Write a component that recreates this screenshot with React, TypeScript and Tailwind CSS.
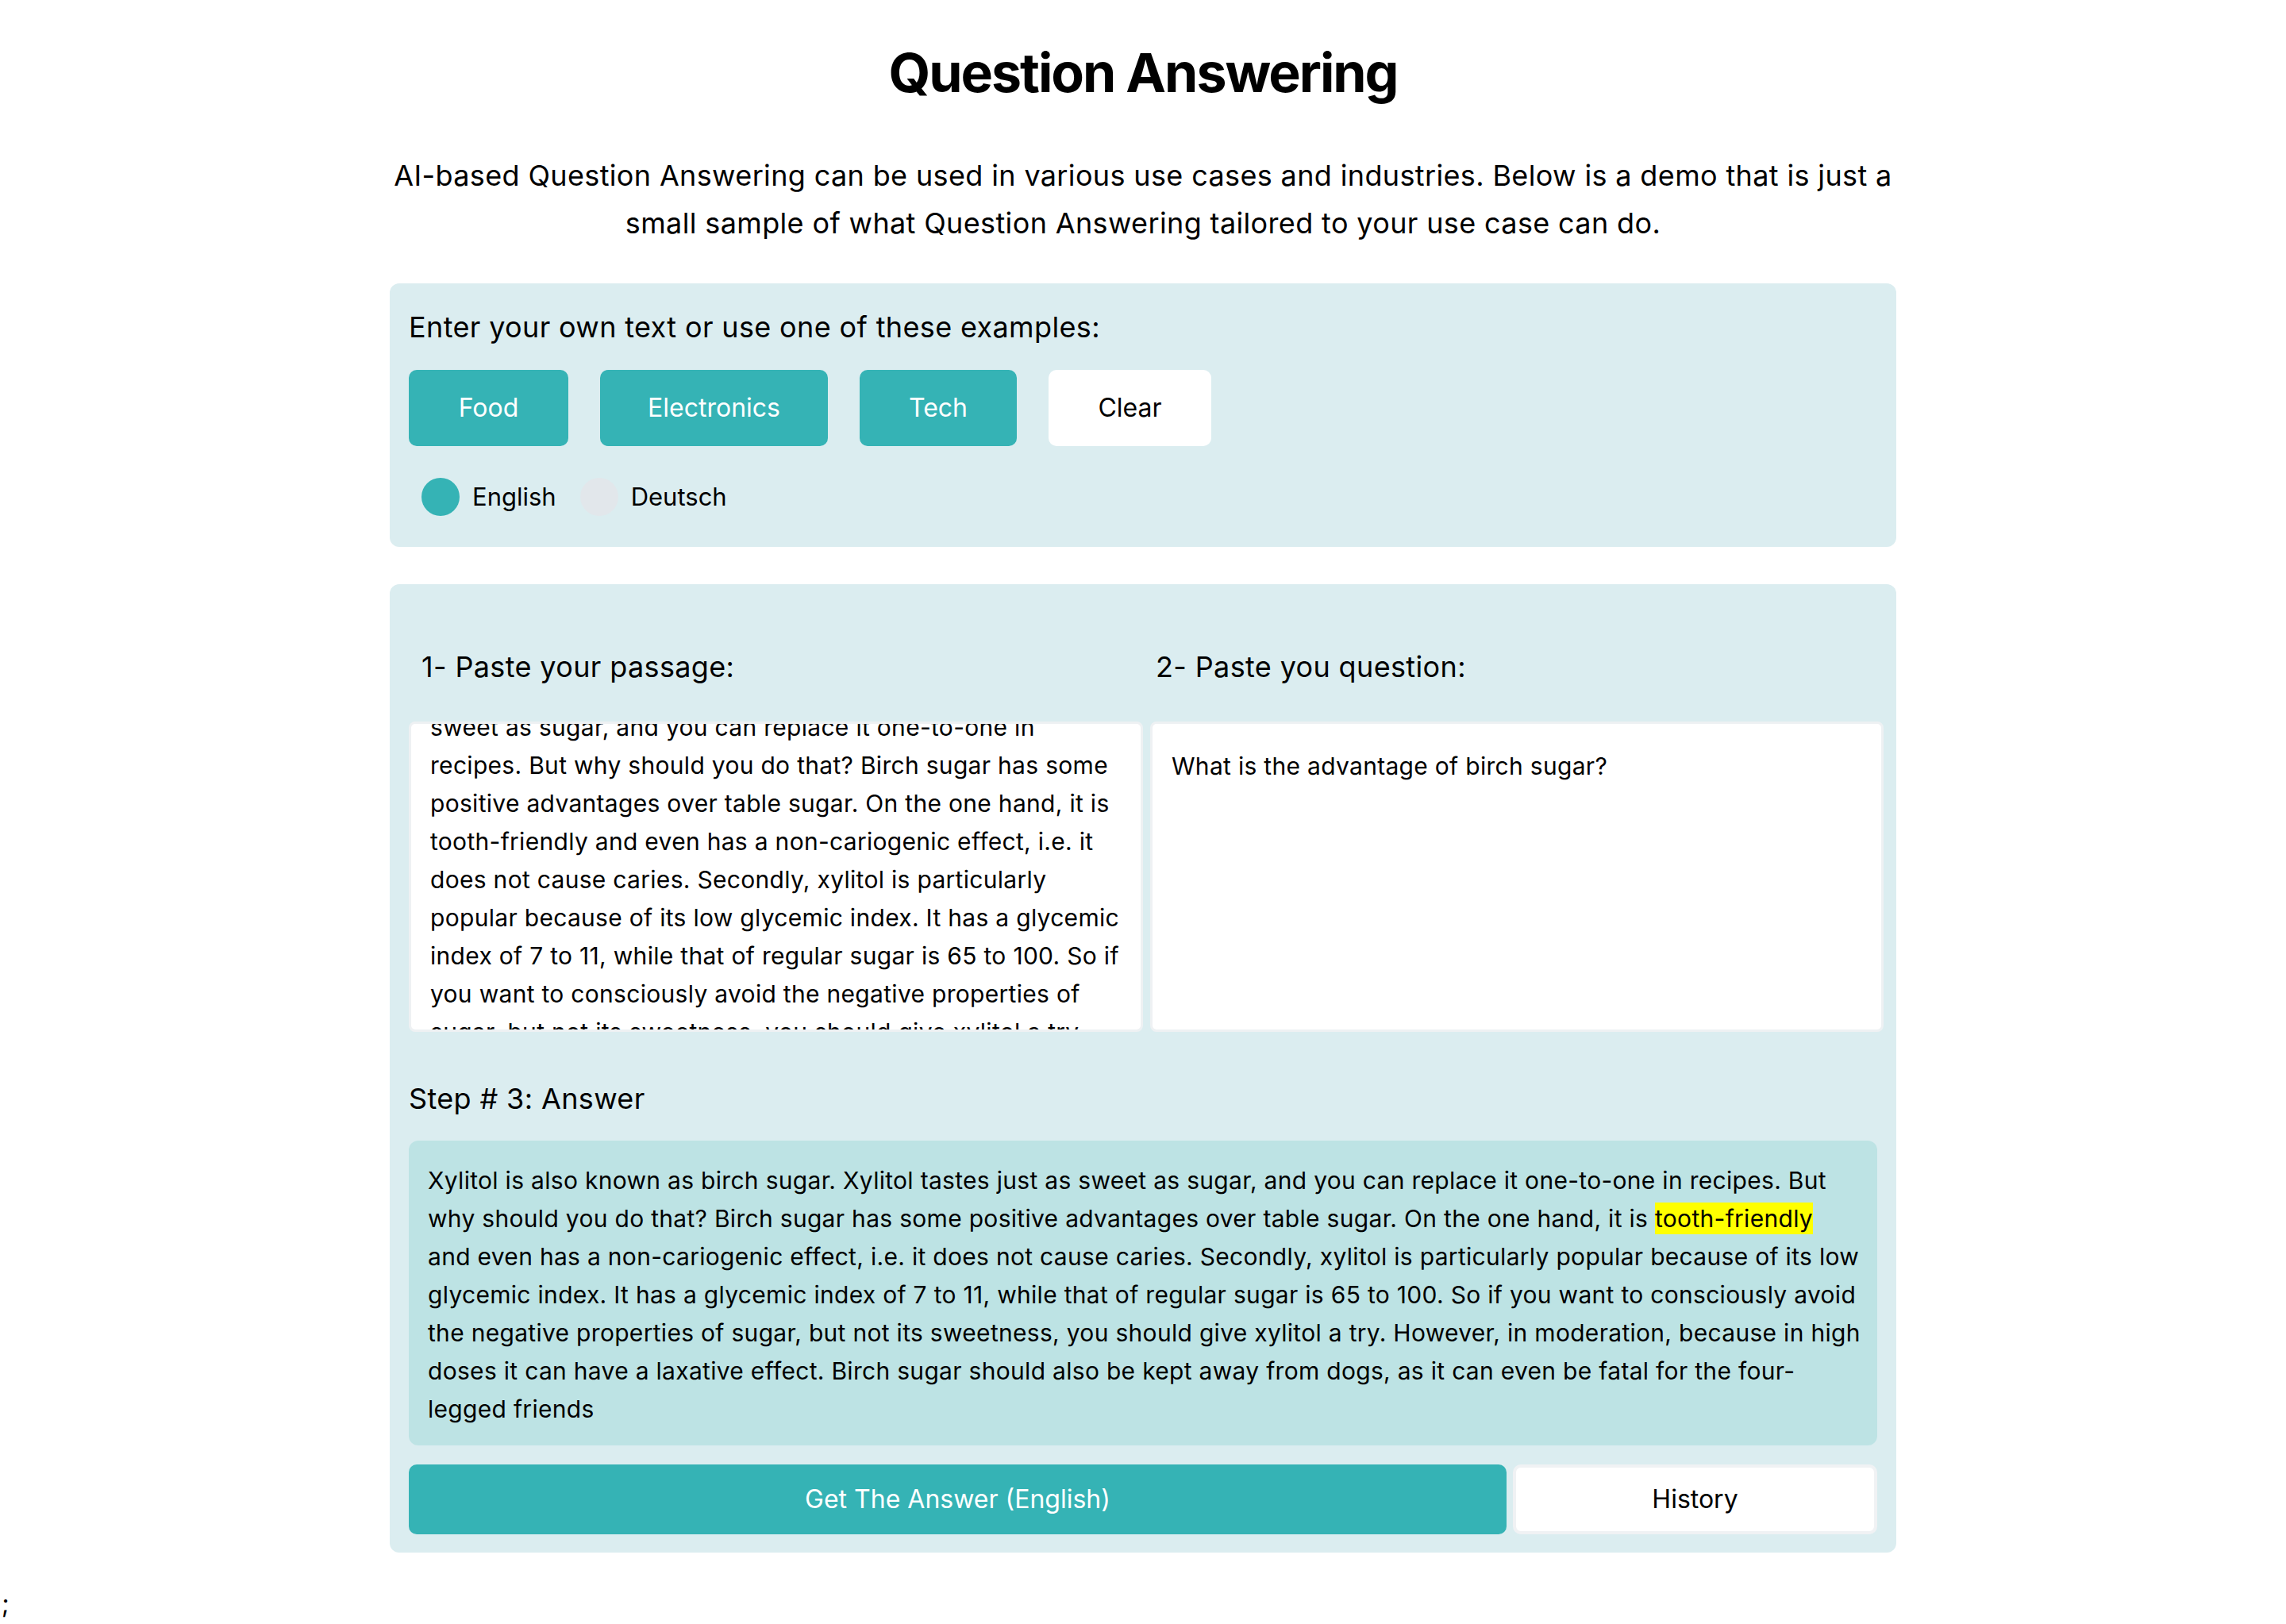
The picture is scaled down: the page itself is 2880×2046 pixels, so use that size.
import React from "react";

// visible part of the scrolled passage box
const passageLines = [
  "sweet as sugar, and you can replace it one-to-one in",
  "recipes. But why should you do that? Birch sugar has some",
  "positive advantages over table sugar. On the one hand, it is",
  "tooth-friendly and even has a non-cariogenic effect, i.e. it",
  "does not cause caries. Secondly, xylitol is particularly",
  "popular because of its low glycemic index. It has a glycemic",
  "index of 7 to 11, while that of regular sugar is 65 to 100. So if",
  "you want to consciously avoid the negative properties of",
  "sugar, but not its sweetness, you should give xylitol a try.",
];

const examples = [
  { label: "Food", w: "w-[201px]" },
  { label: "Electronics", w: "w-[287px]" },
  { label: "Tech", w: "w-[198px]" },
];

const App = () => {
  return (
    <div className="min-h-screen bg-white text-black font-['Inter',sans-serif]">
      <div className="w-[1898px] mx-auto">
        <h1 className="pt-[51px] text-center text-[68px] leading-[80px] font-bold tracking-[-0.03em]">
          Question Answering
        </h1>

        <p className="mt-[60px] text-center text-[36px] leading-[60px] tracking-[0.01em]">
          <span className="block whitespace-nowrap">
            AI-based Question Answering can be used in various use cases and industries. Below is a demo that is just a
          </span>
          <span className="block whitespace-nowrap">
            small sample of what Question Answering tailored to your use case can do.
          </span>
        </p>

        {/* examples */}
        <section className="mt-[46px] bg-[#dbedf0] rounded-[12px] px-6 pt-[27px] pb-[39px]">
          <h2 className="text-[36px] leading-[56px] tracking-[0.01em]">
            Enter your own text or use one of these examples:
          </h2>
          <div className="mt-[26px] flex gap-10">
            {examples.map((b) => (
              <button
                key={b.label}
                className={`${b.w} h-[96px] rounded-[10px] bg-[#35b3b5] text-white text-[32px]`}
              >
                {b.label}
              </button>
            ))}
            <button className="w-[205px] h-[96px] rounded-[10px] bg-white text-[32px]">Clear</button>
          </div>
          <div className="mt-[40px] pl-4 flex items-center gap-[30px] text-[31px]">
            <label className="flex items-center gap-[16px]">
              <span className="w-12 h-12 rounded-full bg-[#35b3b5]" />
              English
            </label>
            <label className="flex items-center gap-[16px]">
              <span className="w-12 h-12 rounded-full bg-[#e2e7eb]" />
              Deutsch
            </label>
          </div>
        </section>

        {/* question answering */}
        <section className="mt-[47px] bg-[#dbedf0] rounded-[12px] px-6 pt-[76px] pb-[23px]">
          <div className="grid grid-cols-2 text-[36px] leading-[56px] tracking-[0.01em]">
            <h3 className="px-4">1- Paste your passage:</h3>
            <h3 className="px-4">2- Paste you question:</h3>
          </div>
          <div className="mt-[41px] flex">
            <div className="shrink-0 w-[925px] h-[391px] bg-white border-[3px] border-[#eef1f3] rounded-[8px] overflow-hidden text-[30px] leading-[48px] tracking-[0.01em]">
              <div className="px-6 -mt-[20px]">
                {passageLines.map((l, i) => (
                  <div key={i} className="whitespace-nowrap">
                    {l}
                  </div>
                ))}
              </div>
            </div>
            <div className="shrink-0 ml-[9px] w-[924px] h-[391px] bg-white border-[3px] border-[#eef1f3] rounded-[8px] px-6 pt-[29px] text-[30px] leading-[48px] tracking-[0.01em]">
              What is the advantage of birch sugar?
            </div>
          </div>

          <h3 className="mt-[58px] text-[36px] leading-[52px] tracking-[0.01em]">Step # 3: Answer</h3>
          <div className="mt-[27px] bg-[#bde3e4] rounded-[12px] px-6 pt-[26px] pb-[22px] text-[30px] leading-[48px] tracking-[0.01em]">
            <div className="whitespace-nowrap">
              Xylitol is also known as birch sugar. Xylitol tastes just as sweet as sugar, and you can replace it one-to-one in recipes. But
            </div>
            <div className="whitespace-nowrap">
              why should you do that? Birch sugar has some positive advantages over table sugar. On the one hand, it is{" "}
              <span className="bg-[#ffff00] py-[2px]">tooth-friendly</span>
            </div>
            <div className="whitespace-nowrap">
              and even has a non-cariogenic effect, i.e. it does not cause caries. Secondly, xylitol is particularly popular because of its low
            </div>
            <div className="whitespace-nowrap">
              glycemic index. It has a glycemic index of 7 to 11, while that of regular sugar is 65 to 100. So if you want to consciously avoid
            </div>
            <div className="whitespace-nowrap">
              the negative properties of sugar, but not its sweetness, you should give xylitol a try. However, in moderation, because in high
            </div>
            <div className="whitespace-nowrap">
              doses it can have a laxative effect. Birch sugar should also be kept away from dogs, as it can even be fatal for the four-
            </div>
            <div className="whitespace-nowrap">legged friends</div>
          </div>

          <div className="mt-6 flex gap-2">
            <button className="w-[1383px] h-[88px] rounded-[10px] bg-[#35b3b5] text-white text-[32px]">
              Get The Answer (English)
            </button>
            <button className="flex-1 h-[88px] rounded-[10px] bg-white border-4 border-[#f0f2f4] text-[32px]">
              History
            </button>
          </div>
        </section>
      </div>
      <div className="mt-[41px] pl-[2px] text-[32px] leading-[48px]">;</div>
    </div>
  );
};

export default App;
